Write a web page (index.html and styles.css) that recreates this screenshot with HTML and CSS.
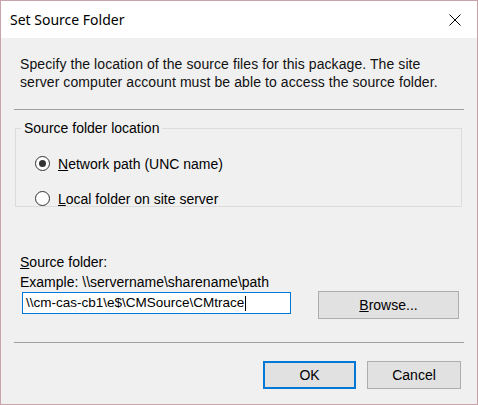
FILE: index.html
```html
<!DOCTYPE html>
<html>
<head>
<meta charset="utf-8">
<link rel="stylesheet" href="styles.css">
</head>
<body>
<div class="window">
  <div class="titlebar">
    <span class="title">Set Source Folder</span>
    <svg class="close" width="12" height="12" viewBox="0 0 12 12"><path d="M0.5 0.5 L11.5 11.5 M11.5 0.5 L0.5 11.5" stroke="#000" stroke-width="1" fill="none"/></svg>
  </div>
  <p class="desc">Specify the location of the source files for this package. The site<br>server computer account must be able to access the source folder.</p>
  <div class="sep"></div>
  <fieldset class="group">
    <legend class="legend">Source folder location</legend>
    <div class="radio-row"><span class="radio checked"></span><span><u>N</u>etwork path (UNC name)</span></div>
    <div class="radio-row"><span class="radio"></span><span><u>L</u>ocal folder on site server</span></div>
  </fieldset>
  <div class="source">
    <div class="label"><u>S</u>ource folder:</div>
    <div class="label example">Example: \\servername\sharename\path</div>
    <div class="input-row">
      <div class="input">\\cm-cas-cb1\e$\CMSource\CMtrace<span class="caret"></span></div>
      <div class="btn browse"><u>B</u>rowse...</div>
    </div>
  </div>
  <div class="sep sep2"></div>
  <div class="buttons">
    <div class="btn ok">OK</div>
    <div class="btn cancel">Cancel</div>
  </div>
</div>
</body>
</html>
```
FILE: styles.css
```css
html, body { margin: 0; padding: 0; background: #f0f0f0; }
.window {
  width: 478px; height: 405px; box-sizing: border-box;
  border: 1px solid #c9a3a9;
  background: #f0f0f0;
  display: flex; flex-direction: column;
  font-family: "Liberation Sans", Arial, sans-serif;
  font-size: 14px; color: #000;
}
.titlebar {
  height: 37px; flex: none; background: #fff;
  display: flex; align-items: center; justify-content: space-between;
  padding: 0 16px 0 9px;
}
.title { font-family: "Noto Sans", sans-serif; font-size: 14px; color: #000; }
.close { display: block; }
.desc { margin: 17px 0 0 19px; line-height: 18px; color: #111; letter-spacing: 0.08px; }
.sep { margin: 18px 13px 0 13px; height: 1px; background: #a0a0a0; flex: none; }
.group {
  margin: 10px 15px 0 14px; padding: 10px 0 0 0;
  border: 1px solid #dcdcdc; height: 75px;
}
.legend { padding: 0 3px; margin-left: 5px; font-size: 14px; }
.radio-row { display: flex; align-items: center; gap: 8px; height: 35px; padding-left: 19px; }
.radio {
  width: 13px; height: 13px; border-radius: 50%;
  border: 1px solid #333; background: #fff; position: relative; flex: none;
}
.radio.checked::after {
  content: ""; position: absolute; left: 3px; top: 3px;
  width: 7px; height: 7px; border-radius: 50%; background: #333;
}
.source { margin: 45px 0 0 19px; }
.label { line-height: 20px; }
.input-row { display: flex; align-items: flex-start; margin-top: -1px; }
.input {
  width: 269px; height: 22px; box-sizing: border-box; margin-top: 1px;
  border: 1px solid #0078d7; background: #fff;
  padding-left: 3px; line-height: 20px; margin-left: 2px;
  display: flex; align-items: center; white-space: nowrap; font-size: 13.5px;
}
.caret { display: inline-block; width: 1px; height: 15px; background: #000; margin-left: 1px; }
.btn {
  height: 28px; box-sizing: border-box;
  background: #e1e1e1; border: 1px solid #adadad;
  display: flex; align-items: center; justify-content: center;
}
.browse { width: 141px; margin-left: 27px; }
.sep2 { margin-top: 23px; }
.buttons { display: flex; justify-content: flex-end; gap: 11px; margin: 18px 16px 0 0; }
.ok { width: 93px; border: 2px solid #0078d7; }
.cancel { width: 94px; }
```
